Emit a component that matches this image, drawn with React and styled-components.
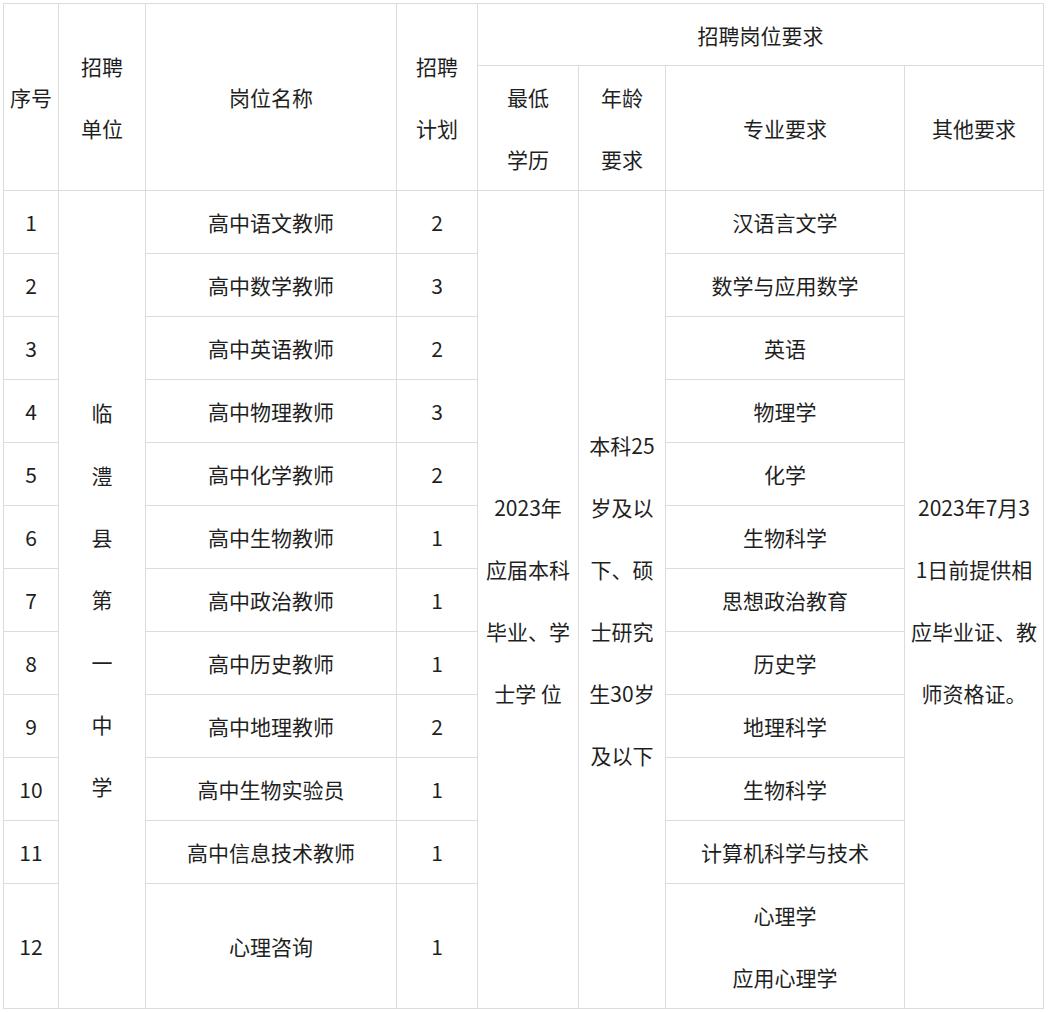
import React from "react";
import styled, { createGlobalStyle } from "styled-components";

const GlobalStyle = createGlobalStyle`
  html, body {
    margin: 0;
    padding: 0;
    background: #ffffff;
  }
  body {
    font-family: "Noto Sans CJK SC", "Microsoft YaHei", sans-serif;
    color: #1f1f1f;
  }
`;

const Page = styled.div`
  padding: 3px 0 0 3px;
`;

const Table = styled.table`
  border-collapse: collapse;
  table-layout: fixed;
  width: 1040px;
  font-size: 21px;
`;

const Row = styled.tr`
  height: ${(p) => p.$h}px;
`;

const Cell = styled.td`
  border: 1px solid #dcdcdc;
  padding: 0;
  text-align: center;
  vertical-align: middle;
  line-height: ${(p) => p.$lh || 28}px;
  white-space: nowrap;
  font-weight: 400;
`;

const Line = styled.span`
  display: block;
  white-space: pre;
`;

const cols = [55, 87, 251, 81, 101, 87, 239, 139];

const jobs = [
  { no: "1", name: "高中语文教师", plan: "2", major: ["汉语言文学"] },
  { no: "2", name: "高中数学教师", plan: "3", major: ["数学与应用数学"] },
  { no: "3", name: "高中英语教师", plan: "2", major: ["英语"] },
  { no: "4", name: "高中物理教师", plan: "3", major: ["物理学"] },
  { no: "5", name: "高中化学教师", plan: "2", major: ["化学"] },
  { no: "6", name: "高中生物教师", plan: "1", major: ["生物科学"] },
  { no: "7", name: "高中政治教师", plan: "1", major: ["思想政治教育"] },
  { no: "8", name: "高中历史教师", plan: "1", major: ["历史学"] },
  { no: "9", name: "高中地理教师", plan: "2", major: ["地理科学"] },
  { no: "10", name: "高中生物实验员", plan: "1", major: ["生物科学"] },
  { no: "11", name: "高中信息技术教师", plan: "1", major: ["计算机科学与技术"] },
  { no: "12", name: "心理咨询", plan: "1", major: ["心理学", "应用心理学"] },
];

const Lines = ({ items }) => items.map((t, i) => <Line key={i}>{t}</Line>);

export default function App() {
  return (
    <>
      <GlobalStyle />
      <Page>
        <Table>
          <colgroup>
            {cols.map((w, i) => (
              <col key={i} style={{ width: w }} />
            ))}
          </colgroup>
          <tbody>
            <Row $h={62}>
              <Cell rowSpan={2}>序号</Cell>
              <Cell rowSpan={2} $lh={62}>
                <Lines items={["招聘", "单位"]} />
              </Cell>
              <Cell rowSpan={2}>岗位名称</Cell>
              <Cell rowSpan={2} $lh={62}>
                <Lines items={["招聘", "计划"]} />
              </Cell>
              <Cell colSpan={4}>招聘岗位要求</Cell>
            </Row>
            <Row $h={125}>
              <Cell $lh={62}>
                <Lines items={["最低", "学历"]} />
              </Cell>
              <Cell $lh={62}>
                <Lines items={["年龄", "要求"]} />
              </Cell>
              <Cell>专业要求</Cell>
              <Cell>其他要求</Cell>
            </Row>
            {jobs.map((j, i) => (
              <Row key={j.no} $h={j.major.length > 1 ? 125 : 63}>
                <Cell>{j.no}</Cell>
                {i === 0 && (
                  <Cell rowSpan={12} $lh={62.3}>
                    <Lines items={["临", "澧", "县", "第", "一", "中", "学"]} />
                  </Cell>
                )}
                <Cell>{j.name}</Cell>
                <Cell>{j.plan}</Cell>
                {i === 0 && (
                  <Cell rowSpan={12} $lh={62}>
                    <Lines items={["2023年", "应届本科", "毕业、学", "士学 位"]} />
                  </Cell>
                )}
                {i === 0 && (
                  <Cell rowSpan={12} $lh={62}>
                    <Lines items={["本科25", "岁及以", "下、硕", "士研究", "生30岁", "及以下"]} />
                  </Cell>
                )}
                <Cell $lh={62}>
                  <Lines items={j.major} />
                </Cell>
                {i === 0 && (
                  <Cell rowSpan={12} $lh={62}>
                    <Lines items={["2023年7月3", "1日前提供相", "应毕业证、教", "师资格证。"]} />
                  </Cell>
                )}
              </Row>
            ))}
          </tbody>
        </Table>
      </Page>
    </>
  );
}
